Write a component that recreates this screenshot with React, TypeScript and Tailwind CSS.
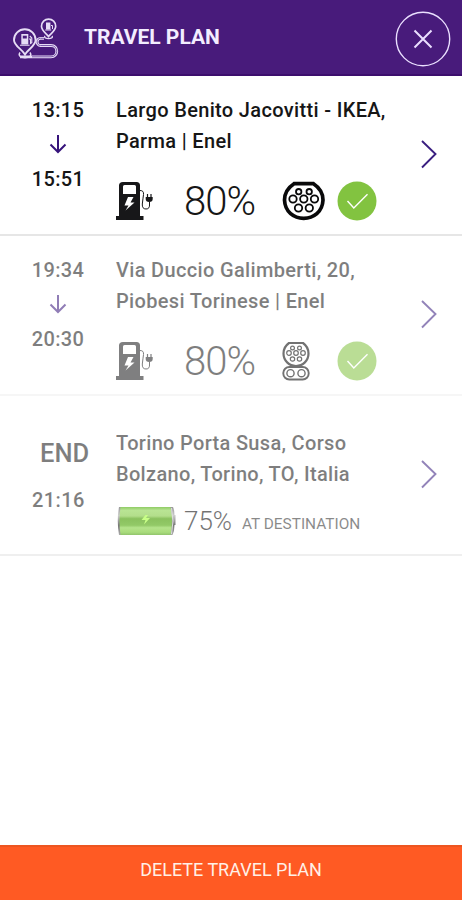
import React from 'react';

function RouteIcon() {
  return (
    <svg width="46" height="44" viewBox="0 0 46 44" fill="none" stroke="#e6dcf5" strokeWidth="1.5" className="mt-[5px] shrink-0">
      <path d="M31 20.300h-3.500c-4.500 0-4.500 7.200 0 7.200H38c7.700 0 7.700 11.300 0 11.300H7" strokeWidth="2.800" />
      <path d="M31 20.300h-3.500c-4.500 0-4.500 7.200 0 7.200H38c7.700 0 7.700 11.300 0 11.300H19" stroke="#6f4da3" strokeWidth="0.900" />
      <path d="M12 36.500C9 31 1 28 1 22a10.800 10.800 0 0 1 21.600 0c0 6-7.600 9-10.600 14.500z" fill="#481b7b" strokeWidth="1.900" />
      <path d="M35.500 18.500c-2.300-3-7-6-7-10.300a7.100 7.100 0 0 1 14.200 0c0 4.300-4.900 7.300-7.200 10.300z" fill="#481b7b" strokeWidth="1.700" />
      <path d="M8.300 16h7v10.500h-7z" fill="#e6dcf5" stroke="none" />
      <path d="M9.800 17.700h4v2.800h-4z" fill="#481b7b" stroke="none" />
      <path d="M7 27.200h9.600M16 21h1.500v4.500l1.300-.8V20l-2-2" strokeWidth="1.100" />
      <path d="M33 4.500h4.400v7H33z" fill="#e6dcf5" stroke="none" />
      <path d="M38 7.500h1.500v3.500M32.200 12h6" strokeWidth="1" />
      <path d="M7 34.500c-5 7 15 7 10 0M32 18c-2.500 3.500 9.500 3.500 7 0" strokeWidth="1.400" />
    </svg>
  );
}

function PumpIcon() {
  return (
    <svg width="38" height="40" viewBox="0 0 38 40" className="shrink-0">
      <path fill="#171719" fillRule="evenodd" d="M7 1h13.500Q24 1 24 4.500V35h3.500v4H0v-4h3V4.500Q3 1 7 1zM8.500 4Q7 4 7 5.500V13h13V5.500Q20 4 18.500 4zM12 16l-3.500 8.500h4L9.500 29.500l9-8h-4l3-5.500z" />
      <g fill="none" stroke="#171719">
        <path d="M24 9.500q4 0 3.500 4t-1.200 9.500q-.3 5 3.700 5t3.500-5v-2" strokeWidth="1" />
        <path d="M31.500 13v4M35 13v4" strokeWidth="1.200" />
      </g>
      <path fill="#171719" d="M29.700 16h7v2q0 3-3.500 3t-3.500-3z" />
    </svg>
  );
}

function TypeTwoPlug() {
  return (
    <svg width="44" height="40" viewBox="0 0 44 40" fill="none" stroke="#09090a" className="shrink-0">
      <path d="M12 2.700h19.500Q41 9 41 19C40.500 31 31.500 37.300 21.700 37.300S3 31 2.500 19Q2.500 9 12 2.700z" strokeWidth="3.700" />
      <g strokeWidth="1.800">
        <circle cx="16.700" cy="10.700" r="2.700" />
        <circle cx="27.200" cy="10.700" r="2.700" />
        <circle cx="11" cy="18" r="3.700" />
        <circle cx="21.800" cy="18" r="3.700" />
        <circle cx="32.500" cy="18" r="3.700" />
        <circle cx="16.500" cy="27" r="3.700" />
        <circle cx="27.300" cy="27" r="3.700" />
      </g>
    </svg>
  );
}

function ComboPlug() {
  return (
    <svg width="28" height="40" viewBox="0 0 28 40" fill="none" stroke="#000" className="shrink-0">
      <path d="M7 2h14q5.500 4 5.500 10.500c0 7-5.500 12.500-12.500 12.500S1.500 19.500 1.500 12.500Q1.500 6 7 2z" strokeWidth="2.200" />
      <g strokeWidth="1.200">
        <circle cx="10.500" cy="7" r="1.900" />
        <circle cx="17.500" cy="7" r="1.900" />
        <circle cx="7" cy="12" r="2.300" />
        <circle cx="14" cy="12" r="2.300" />
        <circle cx="21" cy="12" r="2.300" />
        <circle cx="10.500" cy="18" r="2.200" />
        <circle cx="17.500" cy="18" r="2.200" />
      </g>
      <rect x="1.300" y="26" width="25.400" height="12.500" rx="6" strokeWidth="1.900" />
      <circle cx="8.500" cy="32.200" r="3.600" strokeWidth="1.400" />
      <circle cx="19.500" cy="32.200" r="3.600" strokeWidth="1.400" />
    </svg>
  );
}

function CheckBadge() {
  return (
    <svg width="40" height="40" viewBox="0 0 40 40" className="shrink-0">
      <circle cx="20" cy="20" r="19.500" fill="#82c340" />
      <path d="M10.500 20l6.300 7L30.500 13.300" fill="none" stroke="#fff" strokeWidth="1.400" />
    </svg>
  );
}

function Battery() {
  return (
    <svg width="60" height="32" viewBox="0 0 60 32" className="shrink-0">
      <defs>
        <linearGradient id="cell" x1="0" y1="0" x2="0" y2="1">
          <stop offset="0" stopColor="#8fcb64" />
          <stop offset=".12" stopColor="#b9e494" />
          <stop offset=".32" stopColor="#b3de8b" />
          <stop offset=".42" stopColor="#8ac15e" />
          <stop offset=".65" stopColor="#92c967" />
          <stop offset=".74" stopColor="#b4e38b" />
          <stop offset=".9" stopColor="#a9dc7c" />
          <stop offset="1" stopColor="#91c46c" />
        </linearGradient>
        <linearGradient id="cap" x1="0" y1="0" x2="0" y2="1">
          <stop offset="0" stopColor="#999" />
          <stop offset=".3" stopColor="#ccc" />
          <stop offset=".65" stopColor="#777" />
          <stop offset="1" stopColor="#aaa" />
        </linearGradient>
      </defs>
      <path d="M3 2H57q1.500 3 1.500 8h1v10h-1q0 6-2 10H3Q0.500 16 3 2z" fill="url(#cap)" />
      <path d="M4.500 2H54.500q3 14 0 28H4.500Q2.500 16 4.500 2z" fill="url(#cell)" />
      <path d="M55.500 3q3 13 0 26" fill="none" stroke="#ddd" strokeWidth="1" />
      <path d="M29.500 10l-4 5h4l-1.500 4.500 6-6.500h-4l2-3z" fill="#c8ff87" />
    </svg>
  );
}

function DownArrow() {
  return (
    <svg width="18" height="20" viewBox="0 0 18 20" fill="none" stroke="#36137b" strokeWidth="2" className="mb-[10px] mt-2">
      <path d="M9 1v17M1.500 10.500L9 18l7.500-7.500" />
    </svg>
  );
}

function Chevron() {
  return (
    <svg width="18" height="30" viewBox="0 0 18 30" fill="none" stroke="#3a1f80" strokeWidth="1.900" className="-mt-0.5 shrink-0">
      <path d="M2 2l13.500 13L2 28.500" />
    </svg>
  );
}

interface StopProps {
  from: string;
  to: string;
  lines: string[];
  plug: React.ReactNode;
  dim?: boolean;
}

function Stop({ from, to, lines, plug, dim }: StopProps) {
  return (
    <section className={`h-40 border-b-2 ${dim ? 'border-[#f6f6f6]' : 'border-[#e6e6e6]'}`}>
      <div className={`flex h-full items-center ${dim ? 'opacity-55' : ''}`}>
        <div className="flex w-[116px] flex-col items-center self-start pt-[19px] text-[20px] font-medium leading-[31px] tracking-[0.4px]">
          <span>{from}</span>
          <DownArrow />
          <span>{to}</span>
        </div>
        <div className="w-[304px] self-start pt-[19px]">
          {lines.map((line) => (
            <p key={line} className="whitespace-nowrap text-[20px] font-medium leading-[31px] tracking-[0.34px]">{line}</p>
          ))}
          <div className="mt-6 flex h-10 items-center">
            <PumpIcon />
            <span className="ml-[30px] w-[98px] pt-0.5 text-[40px] font-light leading-10 tracking-[-0.9px]">80%</span>
            <div className="w-[55px]">{plug}</div>
            <CheckBadge />
          </div>
        </div>
        <Chevron />
      </div>
    </section>
  );
}

export default function App() {
  return (
    <main className="flex h-[900px] w-[462px] flex-col overflow-hidden bg-white font-[Roboto,sans-serif] text-[#161616]">
      <header className="flex h-[76px] shrink-0 items-center border-b-2 border-[#3c0e6d] bg-[#481b7b] pl-[13px] pr-[11px] text-[#f3edff]">
        <RouteIcon />
        <h1 className="ml-[25px] grow text-[21px] font-bold leading-6">TRAVEL PLAN</h1>
        <button aria-label="Close" className="mt-[3px] flex h-14 w-14 items-center justify-center">
          <svg width="56" height="56" viewBox="0 0 56 56" fill="none" stroke="#eadfff">
            <circle cx="28" cy="28" r="26.700" strokeWidth="1.400" />
            <path d="M19.500 19.500l17 17M36.500 19.500l-17 17" strokeWidth="2" />
          </svg>
        </button>
      </header>
      <Stop from="13:15" to="15:51" lines={['Largo Benito Jacovitti - IKEA,', 'Parma | Enel']} plug={<TypeTwoPlug />} />
      <Stop from="19:34" to="20:30" lines={['Via Duccio Galimberti, 20,', 'Piobesi Torinese | Enel']} plug={<ComboPlug />} dim />
      <section className="h-40 border-b-2 border-[#efefef]">
        <div className="flex h-full items-center">
          <div className="w-[116px] self-start pt-[41px] font-medium opacity-55">
            <p className="pl-10 text-[25.5px] leading-8">END</p>
            <p className="mt-4 pl-8 text-[20px] leading-[31px] tracking-[0.4px]">21:16</p>
          </div>
          <div className="w-[304px] self-start pt-8">
            <p className="whitespace-nowrap text-[20px] font-medium leading-[31px] tracking-[0.32px] opacity-55">Torino Porta Susa, Corso</p>
            <p className="whitespace-nowrap text-[20px] font-medium leading-[31px] tracking-[0.32px] opacity-55">Bolzano, Torino, TO, Italia</p>
            <div className="mt-[15px] flex h-8 items-center">
              <div className="h-8"><Battery /></div>
              <span className="ml-2 w-[58px] text-[26px] font-light leading-8 opacity-60">75%</span>
              <span className="pt-[5px] text-[15.4px] leading-6 opacity-50">AT DESTINATION</span>
            </div>
          </div>
          <div className="opacity-55"><Chevron /></div>
        </div>
      </section>
      <button className="mt-auto flex h-[55px] shrink-0 items-center justify-center border-t-2 border-[#ed5520] bg-[#ff5a23] pb-[9px] text-[18px] text-[#fff0e7]">
        DELETE TRAVEL PLAN
      </button>
    </main>
  );
}
